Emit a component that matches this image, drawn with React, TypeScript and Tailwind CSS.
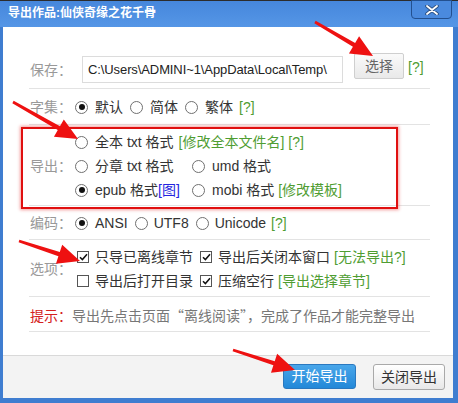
import React from 'react'

const green = 'text-[#4f9d32]'

function Radio({ on }: { on?: boolean }) {
  return (
    <span className="flex h-[13px] w-[13px] shrink-0 items-center justify-center rounded-full border border-[#707070] bg-white">
      {on && <span className="h-[6px] w-[6px] rounded-full bg-[#111]" />}
    </span>
  )
}

function Check({ on }: { on?: boolean }) {
  return (
    <span className="flex h-[12px] w-[12px] shrink-0 items-center justify-center border border-[#555] bg-white">
      {on && (
        <svg width="9" height="8" viewBox="0 0 9 8">
          <path d="M1 4.2 L3.4 6.6 L8 1.2" stroke="#111" strokeWidth="1.5" fill="none" />
        </svg>
      )}
    </span>
  )
}

// red annotation arrow, tail -> tip
function arrow(x1: number, y1: number, x2: number, y2: number, head = 22, hw = 10, sw = 2.2) {
  const dx = x2 - x1
  const dy = y2 - y1
  const len = Math.hypot(dx, dy)
  const ux = dx / len
  const uy = dy / len
  const px = -uy
  const py = ux
  const bx = x2 - ux * head
  const by = y2 - uy * head
  const pts = [
    [x1 + px * sw * 0.6, y1 + py * sw * 0.6],
    [bx + px * sw, by + py * sw],
    [bx + px * hw, by + py * hw],
    [x2, y2],
    [bx - px * hw, by - py * hw],
    [bx - px * sw, by - py * sw],
    [x1 - px * sw * 0.6, y1 - py * sw * 0.6],
  ]
  return pts.map((p) => p.join(',')).join(' ')
}

const Label = ({ children }: { children: React.ReactNode }) => (
  <span className="w-[45px] shrink-0 text-[#999]">{children}</span>
)

export default function App() {
  return (
    <div className="relative flex h-[403px] w-[458px] flex-col overflow-hidden bg-[#3f7dd0] font-['Liberation_Sans','Noto_Sans_CJK_SC',sans-serif] text-[14px] text-[#333]">
      {/* title bar */}
      <div className="relative h-[27px] shrink-0 border-t border-[#2c2c2c] bg-gradient-to-b from-[#4687dc] to-[#5596e6]">
        <span className="absolute left-[8px] top-[5px] text-[12px] font-bold leading-[14px] text-white">
          导出作品:仙侠奇缘之花千骨
        </span>
        <div className="absolute right-[6px] top-[-1px] flex h-[19px] w-[41px] items-center justify-center rounded-b-[4px] border border-[#23508f] bg-[#4a8ade]">
          <svg width="14" height="10" viewBox="0 0 14 10">
            <path d="M2 1 L12 9 M12 1 L2 9" stroke="#2b4f80" strokeWidth="3.6" strokeLinecap="round" />
            <path d="M2 1 L12 9 M12 1 L2 9" stroke="#fff" strokeWidth="1.8" strokeLinecap="round" />
          </svg>
        </div>
      </div>

      {/* body */}
      <div className="ml-[3px] mr-[5px] flex flex-1 flex-col bg-white">
        <div className="ml-[26px] w-[401px] leading-[24px]">
          {/* 保存 */}
          <div className="flex items-start border-b border-[#e3e3e3] pb-[5px] pl-[1px] pt-[26px]">
            <span className="mt-[3px] w-[52px] shrink-0 pt-[2px] text-[#999]">保存：</span>
            <div className="mt-[3px] flex h-[27px] w-[261px] items-center overflow-hidden whitespace-nowrap border border-[#dcdcdc] pl-[5px] text-[13px] tracking-[-0.1px] text-[#222]">
              C:\Users\ADMINI~1\AppData\Local\Temp\
            </div>
            <button className="ml-[11px] h-[26px] w-[50px] rounded-[2px] border border-[#cfcfcf] bg-gradient-to-b from-[#fafafa] to-[#e9e9e9] text-[#666]">
              选择
            </button>
            <span className={`ml-[4px] mt-[2px] ${green}`}>[?]</span>
          </div>

          {/* 字集 */}
          <div className="flex items-center border-b border-[#e3e3e3] pb-[5px] pl-[1px] pt-[6px]">
            <Label>字集：</Label>
            <Radio on />
            <span className="ml-[7px] mr-[7px]">默认</span>
            <Radio />
            <span className="ml-[7px] mr-[7px]">简体</span>
            <Radio />
            <span className="ml-[7px] mr-[6px]">繁体</span>
            <span className={green}>[?]</span>
          </div>

          {/* 导出 */}
          <div className="flex items-center border-b border-[#e3e3e3] pb-[3px] pl-[1px] pt-[5px]">
            <Label>导出：</Label>
            <div className="flex flex-col">
              <div className="flex items-center">
                <Radio />
                <span className="ml-[7px]">全本 txt 格式</span>
                <span className={`ml-[5px] ${green}`}>[修改全本文件名]</span>
                <span className={`ml-[4px] ${green}`}>[?]</span>
              </div>
              <div className="grid grid-cols-[117px_auto] items-center">
                <div className="flex items-center">
                  <Radio />
                  <span className="ml-[7px]">分章 txt 格式</span>
                </div>
                <div className="flex items-center">
                  <Radio />
                  <span className="ml-[7px]">umd 格式</span>
                </div>
              </div>
              <div className="grid grid-cols-[117px_auto] items-center">
                <div className="flex items-center">
                  <Radio on />
                  <span className="ml-[7px]">epub 格式</span>
                  <span className="text-[#2424e0]">[图]</span>
                </div>
                <div className="flex items-center">
                  <Radio />
                  <span className="ml-[7px]">mobi 格式</span>
                  <span className={`ml-[4px] ${green}`}>[修改模板]</span>
                </div>
              </div>
            </div>
          </div>

          {/* 编码 */}
          <div className="flex items-center border-b border-[#e3e3e3] pb-[4px] pl-[1px] pt-[5px]">
            <Label>编码：</Label>
            <Radio on />
            <span className="ml-[7px] mr-[7px]">ANSI</span>
            <Radio />
            <span className="ml-[6px] mr-[7px]">UTF8</span>
            <Radio />
            <span className="ml-[6px] mr-[5px]">Unicode</span>
            <span className={green}>[?]</span>
          </div>

          {/* 选项 */}
          <div className="flex items-center border-b border-[#e3e3e3] pb-[3px] pl-[1px] pt-[5px]">
            <Label>选项：</Label>
            <div className="flex flex-col">
              <div className="grid grid-cols-[123px_auto] items-center">
                <div className="flex items-center pl-[2px]">
                  <Check on />
                  <span className="ml-[6px]">只导已离线章节</span>
                </div>
                <div className="flex items-center pl-[2px]">
                  <Check on />
                  <span className="ml-[6px]">导出后关闭本窗口</span>
                  <span className={`ml-[4px] ${green}`}>[无法导出?]</span>
                </div>
              </div>
              <div className="grid grid-cols-[123px_auto] items-center">
                <div className="flex items-center pl-[2px]">
                  <Check />
                  <span className="ml-[6px]">导出后打开目录</span>
                </div>
                <div className="flex items-center pl-[2px]">
                  <Check on />
                  <span className="ml-[6px]">压缩空行</span>
                  <span className={`ml-[4px] ${green}`}>[导出选择章节]</span>
                </div>
              </div>
            </div>
          </div>

          {/* 提示 */}
          <div className="whitespace-nowrap border-b border-[#e3e3e3] pb-[3px] pl-[1px] pt-[6px] text-[#777]">
            <span className="text-[#d42020]">提示：</span>
            导出先点击页面
            <span className="font-['Noto_Sans_CJK_SC',sans-serif]">“</span>
            离线阅读
            <span className="font-['Noto_Sans_CJK_SC',sans-serif]">”</span>
            ，完成了作品才能完整导出
          </div>
        </div>
      </div>

      {/* footer */}
      <div className="ml-[3px] mr-[5px] flex h-[43px] shrink-0 items-start justify-end gap-[17px] border-t border-[#d9d9d9] bg-[#f3f3f3] pr-[8px] pt-[8px]">
        <button className="h-[25px] w-[73px] rounded-[3px] border border-[#2a78bf] bg-gradient-to-b from-[#48a6ea] to-[#2288d8] text-white">
          开始导出
        </button>
        <button className="h-[26px] w-[72px] rounded-[3px] border border-[#a9a9a9] bg-gradient-to-b from-[#ffffff] to-[#e8e8e8] text-[#333]">
          关闭导出
        </button>
      </div>
      <div className="h-[5px] shrink-0" />

      {/* annotations */}
      <div className="pointer-events-none absolute left-[21px] top-[127px] h-[82px] w-[377px] border-2 border-[#e01010] shadow-[0_0_3px_1px_rgba(230,40,40,0.45)]" />
      <svg className="pointer-events-none absolute left-0 top-0" width="458" height="403">
        <g fill="#ee1111">
          <polygon points={arrow(315, 22, 373, 56)} />
          <polygon points={arrow(13, 102, 78, 139)} />
          <polygon points={arrow(19, 241, 80, 261)} />
          <polygon points={arrow(233, 350, 295, 370)} />
        </g>
      </svg>
    </div>
  )
}
